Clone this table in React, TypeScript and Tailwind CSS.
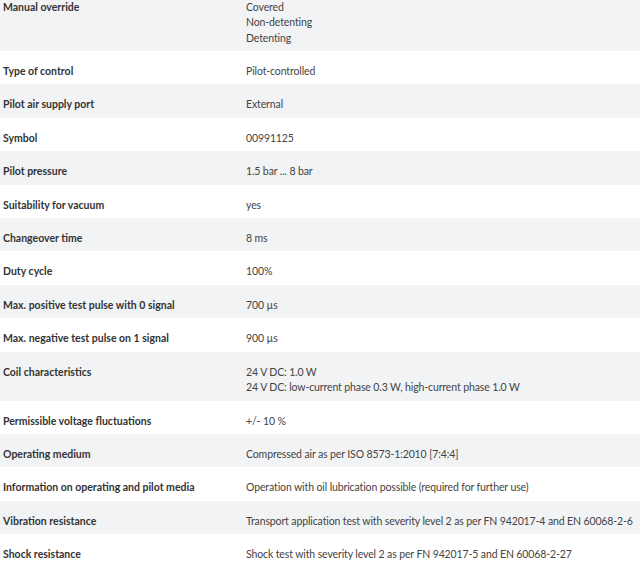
import React from "react";

const rows: [string, string[]][] = [
  ["Manual override", ["Covered", "Non-detenting", "Detenting"]],
  ["Type of control", ["Pilot-controlled"]],
  ["Pilot air supply port", ["External"]],
  ["Symbol", ["00991125"]],
  ["Pilot pressure", ["1.5 bar ... 8 bar"]],
  ["Suitability for vacuum", ["yes"]],
  ["Changeover time", ["8 ms"]],
  ["Duty cycle", ["100%"]],
  ["Max. positive test pulse with 0 signal", ["700 µs"]],
  ["Max. negative test pulse on 1 signal", ["900 µs"]],
  ["Coil characteristics", ["24 V DC: 1.0 W", "24 V DC: low-current phase 0.3 W, high-current phase 1.0 W"]],
  ["Permissible voltage fluctuations", ["+/- 10 %"]],
  ["Operating medium", ["Compressed air as per ISO 8573-1:2010 [7:4:4]"]],
  ["Information on operating and pilot media", ["Operation with oil lubrication possible (required for further use)"]],
  ["Vibration resistance", ["Transport application test with severity level 2 as per FN 942017-4 and EN 60068-2-6"]],
  ["Shock resistance", ["Shock test with severity level 2 as per FN 942017-5 and EN 60068-2-27"]],
];

export default function App() {
  return (
    <div className="w-[640px] h-[562px] overflow-hidden bg-white">
      <div
        className="-mt-[13.2px] flex flex-col text-[10.5px] leading-[15.4px] text-[#333]"
        style={{ fontFamily: "Lato, 'Noto Sans', sans-serif" }}
      >
        {rows.map(([label, values], i) => (
          <div key={label} className={`flex pt-[13px] pb-[5px] ${i % 2 === 0 ? "bg-[#f2f3f5]" : "bg-white"}`}>
            <div className="w-[246px] shrink-0 pl-[3px] font-bold text-[#333]">{label}</div>
            <div className="flex-1 whitespace-nowrap tracking-[-0.12px] text-[#444]">
              {values.map((v) => (
                <div key={v}>{v}</div>
              ))}
            </div>
          </div>
        ))}
      </div>
    </div>
  );
}
